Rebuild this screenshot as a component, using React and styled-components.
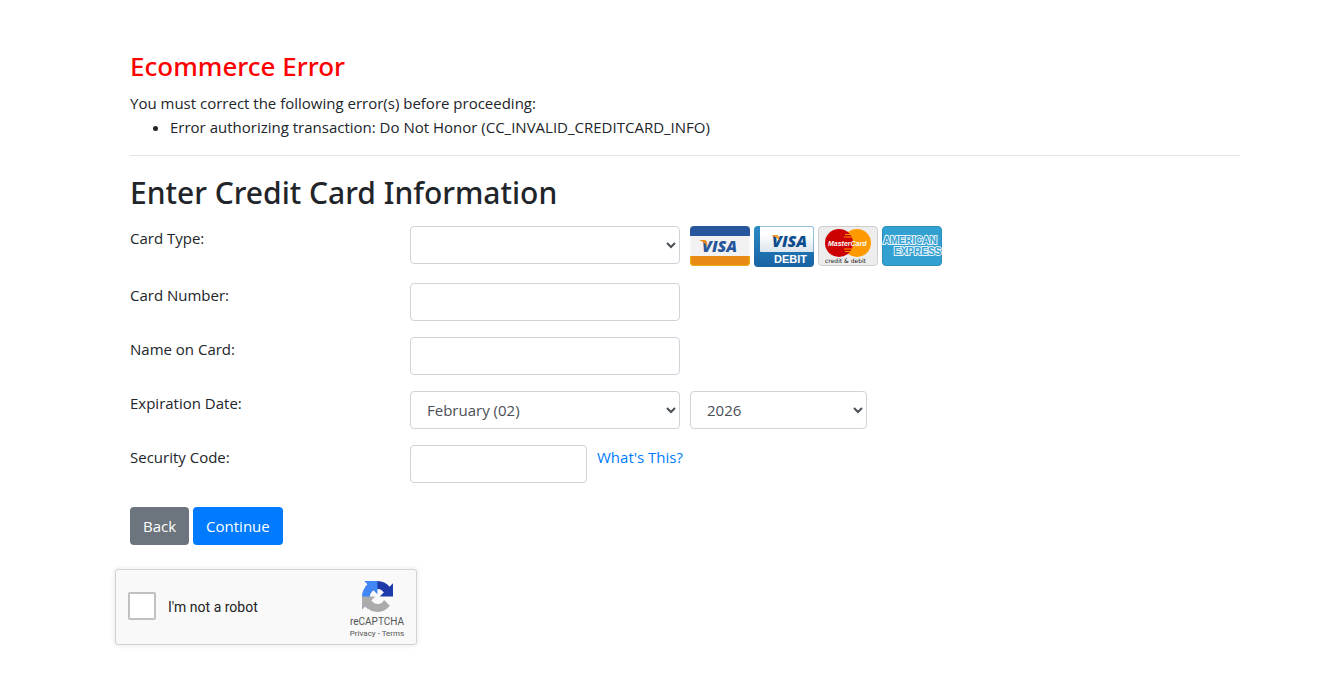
import React from "react";
import styled, { createGlobalStyle } from "styled-components";

const GlobalStyle = createGlobalStyle`
  *, *::before, *::after { box-sizing: border-box; }
  body {
    margin: 0;
    background: #fff;
    color: #212529;
    font-family: "Segoe UI", "Open Sans", "Noto Sans", sans-serif;
    font-size: 15px;
    line-height: 24px;
  }
`;

const Page = styled.main`
  max-width: 1255px;
  margin-right: 68px;
  padding: 49px 0 40px 115px;
`;

const Content = styled.div`
  padding: 0 15px;
`;

const ErrorTitle = styled.h3`
  margin: 0 0 8px;
  color: #f00;
  font-family: "Segoe UI", "Noto Sans", sans-serif;
  font-size: 26px;
  font-weight: 500;
  line-height: 34px;
`;

const ErrorList = styled.ul`
  margin: 0 0 16px;
  padding-left: 40px;
`;

const Divider = styled.hr`
  margin: 0 0 18px;
  border: 0;
  border-top: 1px solid rgba(0, 0, 0, 0.1);
`;

const Title = styled.h2`
  margin: 0 0 14px;
  font-family: "Segoe UI", "Noto Sans", sans-serif;
  font-size: 30px;
  font-weight: 500;
  line-height: 38px;
`;

const Row = styled.div`
  display: flex;
  align-items: flex-start;
  gap: 10px;
  margin-bottom: 16px;
`;

const Label = styled.label`
  flex: 0 0 270px;
`;

const Input = styled.input`
  width: ${(p) => (p.$narrow ? "177px" : "270px")};
  height: 38px;
  padding: 6px 12px;
  border: 1px solid #ced4da;
  border-radius: 4px;
  background: #fff;
  color: #495057;
  font: inherit;
`;

const Select = styled(Input).attrs({ as: "select" })``;

const Link = styled.a`
  color: #007bff;
  text-decoration: none;
`;

const Cards = styled.div`
  display: flex;
  gap: 4px;

  svg { display: block; }
`;

const Actions = styled.div`
  display: flex;
  gap: 4px;
  margin: 24px 0;
`;

const Button = styled.button`
  height: 38px;
  padding: 0 13px;
  border: 0;
  border-radius: 4px;
  background: ${(p) => (p.$primary ? "#007bff" : "#6c757d")};
  color: #fff;
  font: inherit;
`;

const Captcha = styled.div`
  display: flex;
  align-items: center;
  width: 302px;
  height: 76px;
  padding-left: 12px;
  border: 1px solid #d3d3d3;
  border-radius: 3px;
  background: #f9f9f9;
  box-shadow: 0 0 4px 1px rgba(0, 0, 0, 0.08);
  color: #222;
  font-family: Roboto, sans-serif;
`;

const RobotCheck = styled.input`
  appearance: none;
  width: 28px;
  height: 28px;
  margin: 0 12px 2px 0;
  border: 2px solid #c1c1c1;
  border-radius: 2px;
  background: #fff;
`;

const RobotLabel = styled.label`
  flex: 1;
  font-size: 14px;
  line-height: 18px;
`;

const Brand = styled.div`
  display: flex;
  flex-direction: column;
  align-items: center;
  width: 78px;
  padding-top: 6px;
  color: #555;
  font-size: 10px;
  line-height: 12px;

  svg { margin-bottom: 4px; }
`;

const Legal = styled.div`
  font-size: 8px;

  a { color: inherit; text-decoration: none; }
`;

const Visa = () => (
  <svg width="60" height="40" viewBox="0 0 60 40" role="img" aria-label="Visa">
    <rect x="0.5" y="0.5" width="59" height="39" rx="3.5" fill="#f2f2f2" />
    <path d="M0 10V4a4 4 0 0 1 4-4h52a4 4 0 0 1 4 4v6z" fill="#26569b" />
    <path d="M0 30h60v6a4 4 0 0 1-4 4H4a4 4 0 0 1-4-4z" fill="#e98a17" />
    <path d="M.5 30v6q0 3.500 3.500 3.500h52q3.500 0 3.500-3.500v-6" fill="none" stroke="#edb012" />
    <text x="12" y="26" fontFamily="Open Sans" fontSize="16" fontWeight="800" fontStyle="italic" fill="#26569b">VISA</text>
    <path d="M9 14h5.500q2 0 2.300 2l.7 5q-2.500-5-8.500-7z" fill="#e98a17" />
  </svg>
);

const VisaDebit = () => (
  <svg width="60" height="41" viewBox="0 0 60 41" role="img" aria-label="Visa Debit">
    <defs>
      <linearGradient id="debitBlue" x1="0" y1="0" x2="0" y2="1">
        <stop offset="0" stopColor="#2b8cc4" />
        <stop offset="1" stopColor="#1762a3" />
      </linearGradient>
      <linearGradient id="debitWhite" x1="0" y1="0" x2="0" y2="1">
        <stop offset="0.3" stopColor="#fff" />
        <stop offset="1" stopColor="#dde5ee" />
      </linearGradient>
    </defs>
    <rect width="60" height="41" rx="4" fill="url(#debitBlue)" />
    <path d="M6 .5h50a3.500 3.500 0 0 1 3.500 3.500v22H7q-1 0-1-1z" fill="url(#debitWhite)" />
    <text x="18" y="21" fontFamily="Open Sans" fontSize="16" fontWeight="800" fontStyle="italic" fill="#0d4c8c">VISA</text>
    <path d="M17 9h5.500q2 0 2.300 2l.7 4q-2.500-4-8.500-6z" fill="#f39a22" />
    <text x="20" y="37" fontFamily="Liberation Sans" fontSize="11" fontWeight="700" fill="#fff">DEBIT</text>
  </svg>
);

const MasterCard = () => (
  <svg width="60" height="40" viewBox="0 0 60 40" role="img" aria-label="MasterCard credit and debit">
    <rect x="0.5" y="0.5" width="59" height="39" rx="3.500" fill="#ededed" stroke="#cfcfcf" />
    <circle cx="39" cy="17" r="14" fill="#f90" />
    <circle cx="21" cy="17" r="14" fill="#c00" />
    <path d="M27 8.500h6M26 11h9M26 23h9M27 25.500h6" stroke="#f90" strokeWidth="1" />
    <text x="10" y="20" fontFamily="Liberation Sans" fontSize="7" fontWeight="700" fontStyle="italic" fill="#fff">MasterCard</text>
    <text x="7" y="37" fontFamily="DejaVu Sans" fontSize="6" fill="#222">credit &amp; debit</text>
  </svg>
);

const Amex = () => (
  <svg width="60" height="40" viewBox="0 0 60 40" role="img" aria-label="American Express">
    <rect x="0.5" y="0.5" width="59" height="39" rx="3.500" fill="#32a0d1" stroke="#2b8dba" />
    <g fontFamily="Liberation Sans" fontSize="10" fontWeight="700" fill="#32a0d1" stroke="#e4f3fa" strokeWidth="2" paintOrder="stroke">
      <text x="1" y="18">AMERICAN</text>
      <text x="12" y="29">EXPRESS</text>
    </g>
  </svg>
);

const CaptchaLogo = () => (
  <svg width="31" height="31" viewBox="0 0 64 64" aria-hidden="true">
    <path fill="#1c3aa9" d="M64 31.955l-.033-1.370V4.687l-7.160 7.160C50.948 4.674 42.033.093 32.050.093c-10.400 0-19.622 4.960-25.458 12.640l11.736 11.860a15.550 15.550 0 0 1 4.754-5.334c2.050-1.600 4.952-2.906 8.968-2.906.485 0 .860.057 1.135.163 4.976.393 9.288 3.140 11.828 7.124l-8.307 8.307L64 31.953" />
    <path fill="#4285f4" d="M31.862.094l-1.370.033H4.594l7.160 7.160C4.580 13.147 0 22.060 0 32.046c0 10.400 4.960 19.622 12.640 25.458L24.500 45.768a15.550 15.550 0 0 1-5.334-4.754c-1.600-2.050-2.906-4.952-2.906-8.968 0-.485.057-.860.163-1.135.393-4.976 3.140-9.288 7.124-11.828l8.307 8.307L31.860.095" />
    <path fill="#ababab" d="M.001 32.045l.033 1.370v25.898l7.160-7.160c5.860 7.173 14.774 11.754 24.760 11.754 10.400 0 19.622-4.960 25.458-12.640l-11.736-11.860a15.550 15.550 0 0 1-4.754 5.334c-2.050 1.600-4.952 2.906-8.968 2.906-.485 0-.860-.057-1.135-.163-4.976-.393-9.288-3.140-11.828-7.124l8.307-8.307c-10.522.040-22.400.066-27.295-.005" />
  </svg>
);

export default function App() {
  return (
    <>
      <GlobalStyle />
      <Page>
        <Content>
          <ErrorTitle>Ecommerce Error</ErrorTitle>
          <div>You must correct the following error(s) before proceeding:</div>
          <ErrorList>
            <li>Error authorizing transaction: Do Not Honor (CC_INVALID_CREDITCARD_INFO)</li>
          </ErrorList>
          <Divider />
          <Title>Enter Credit Card Information</Title>
          <Row>
            <Label htmlFor="type">Card Type:</Label>
            <Select id="type" defaultValue="">
              <option value="" />
              <option>Visa</option>
              <option>MasterCard</option>
              <option>American Express</option>
            </Select>
            <Cards>
              <Visa />
              <VisaDebit />
              <MasterCard />
              <Amex />
            </Cards>
          </Row>
          <Row>
            <Label htmlFor="number">Card Number:</Label>
            <Input id="number" type="text" />
          </Row>
          <Row>
            <Label htmlFor="name">Name on Card:</Label>
            <Input id="name" type="text" />
          </Row>
          <Row>
            <Label htmlFor="month">Expiration Date:</Label>
            <Select id="month">
              <option>February (02)</option>
            </Select>
            <Select $narrow aria-label="Expiration year">
              <option>2026</option>
            </Select>
          </Row>
          <Row>
            <Label htmlFor="code">Security Code:</Label>
            <Input $narrow id="code" type="text" />
            <Link href="#security-code">What's This?</Link>
          </Row>
          <Actions>
            <Button type="button">Back</Button>
            <Button type="button" $primary>Continue</Button>
          </Actions>
        </Content>
        <Captcha>
          <RobotCheck type="checkbox" id="robot" />
          <RobotLabel htmlFor="robot">I'm not a robot</RobotLabel>
          <Brand>
            <CaptchaLogo />
            reCAPTCHA
            <Legal>
              <a href="#privacy">Privacy</a> - <a href="#terms">Terms</a>
            </Legal>
          </Brand>
        </Captcha>
      </Page>
    </>
  );
}
